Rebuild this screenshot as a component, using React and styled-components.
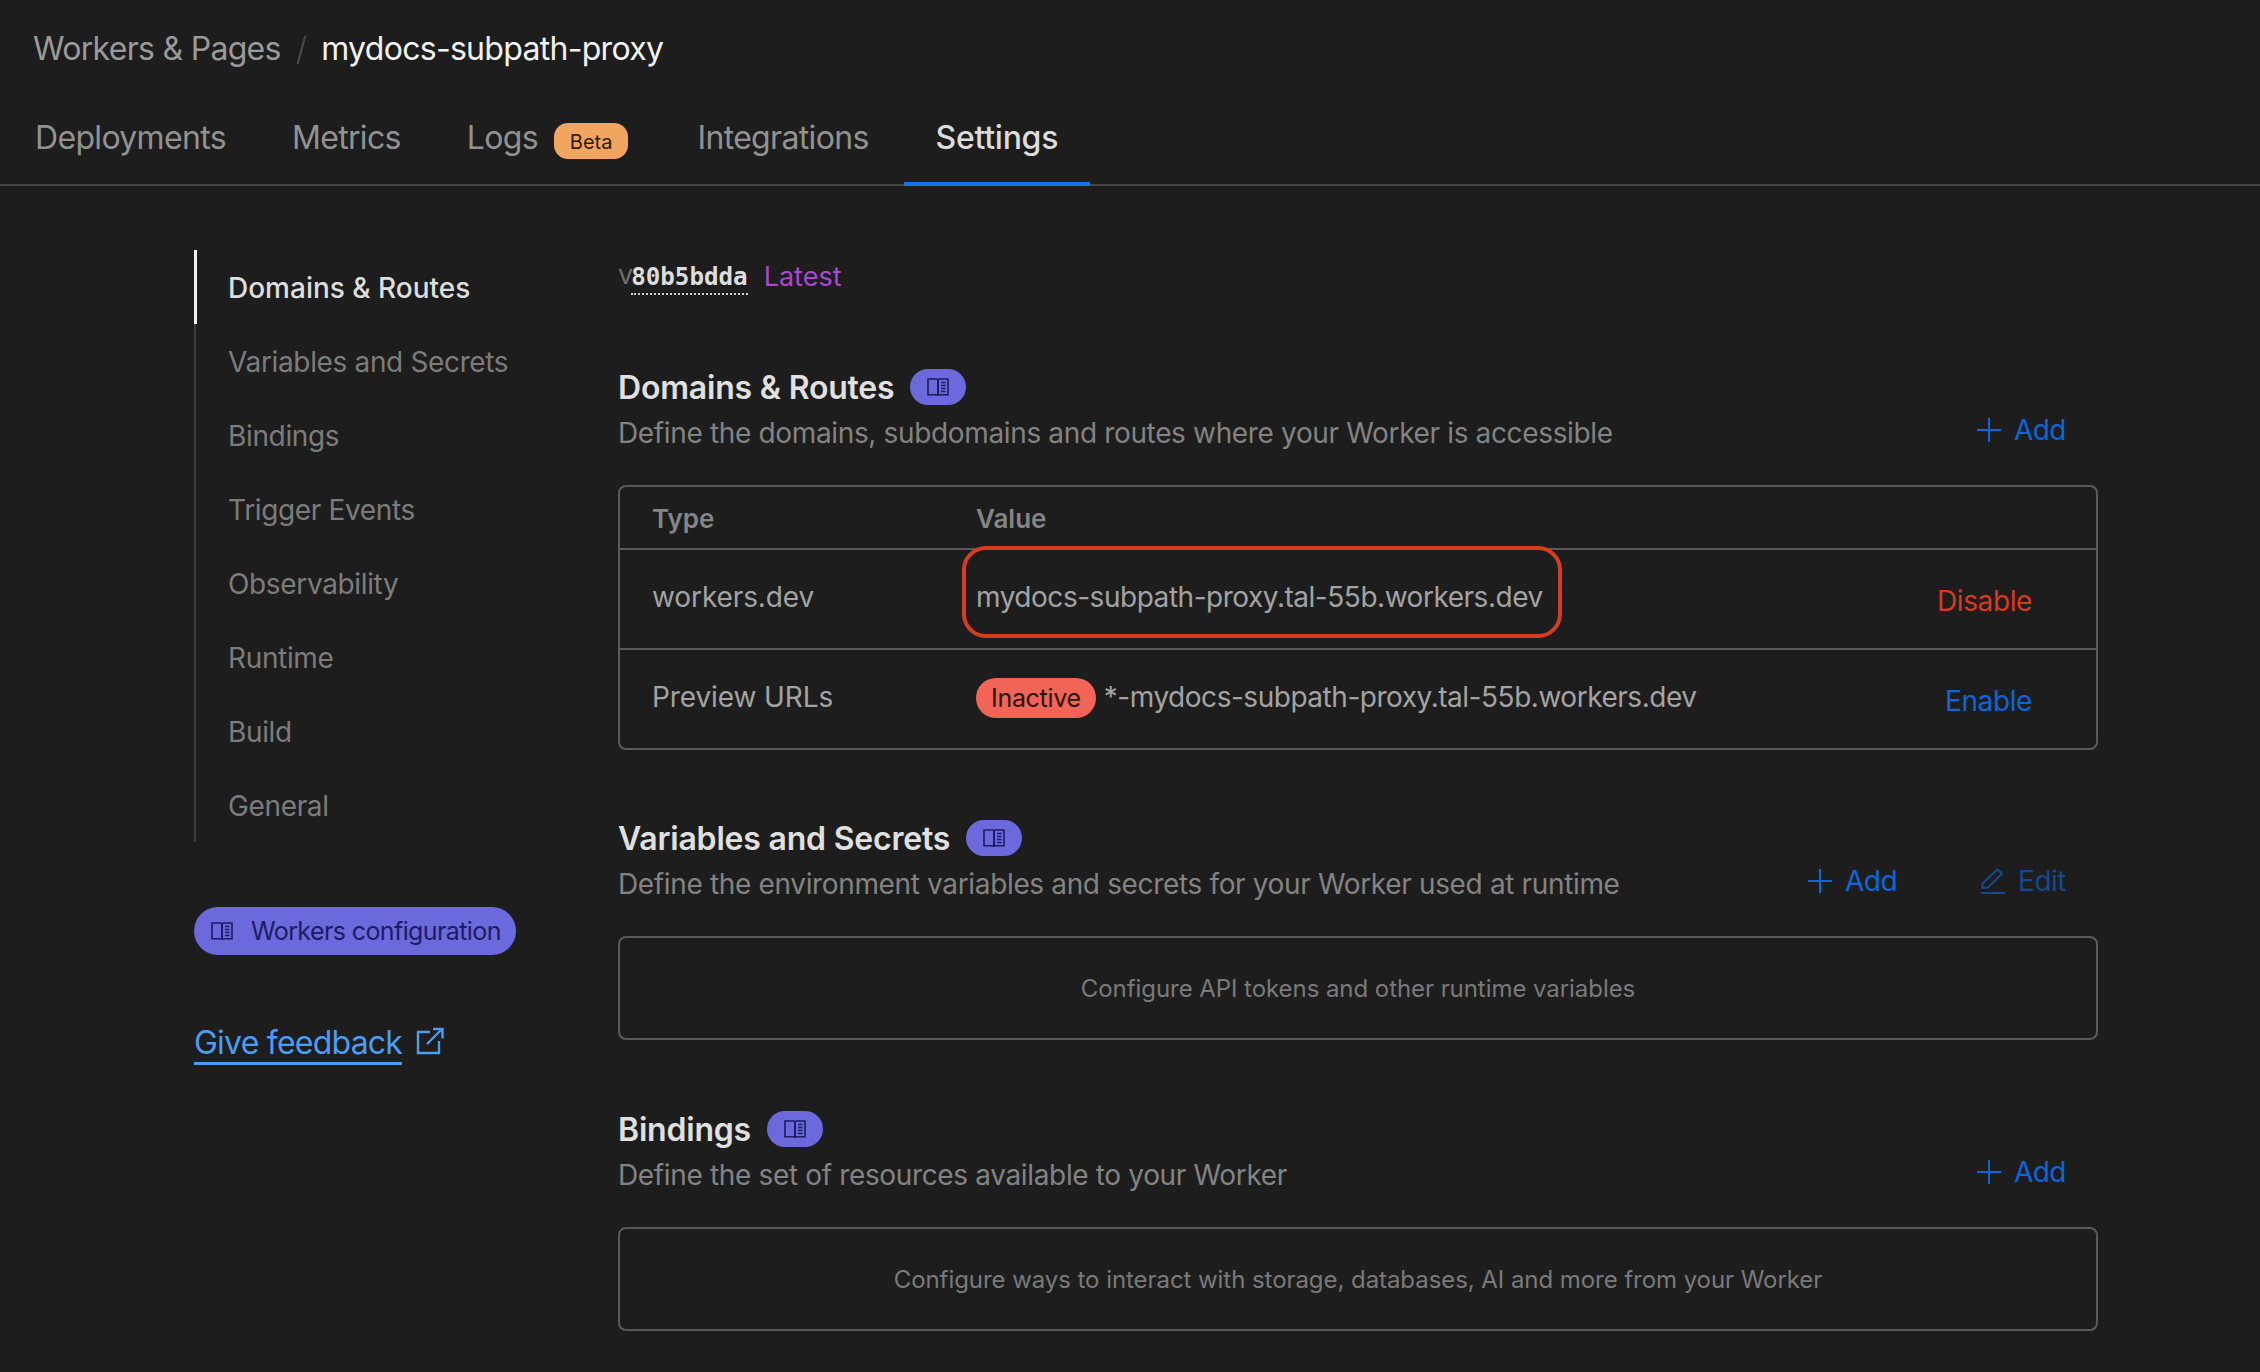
import React from "react";
import styled, { createGlobalStyle } from "styled-components";

const Global = createGlobalStyle`
  html, body { margin: 0; padding: 0; background: #1d1d1d; }
  body { font-family: Inter, "Noto Sans", sans-serif; overflow: hidden; -webkit-font-smoothing: antialiased; }
  * { box-sizing: border-box; }
`;

const Page = styled.div`
  width: 2260px;
  height: 1372px;
  overflow: hidden;
  background: #1d1d1d;
`;
const Crumbs = styled.div`
  height: 98px;
  padding: 30px 0 0 33px;
  display: flex;
  align-items: flex-start;
  font-size: 32px;
  line-height: 38px;
  letter-spacing: -0.7px;
`;
const CrumbLink = styled.span`color: #9a9a9a;`;
const CrumbSep = styled.span`color: #4d4d4d; margin: 0 15px; font-weight: 300;`;
const CrumbCurrent = styled.span`color: #f2f2f2;`;
const TabBar = styled.nav`
  height: 88px;
  display: flex;
  border-bottom: 2px solid #454545;
  padding-left: 2px;
`;
const Tab = styled.div`
  position: relative;
  display: flex;
  align-items: flex-start;
  gap: 16px;
  padding: 21px ${(p) => (p.$active ? 32 : 33)}px 0;
  margin-left: ${(p) => (p.$active ? 2 : 0)}px;
  font-size: 32px;
  line-height: 38px;
  letter-spacing: ${(p) => (p.$active ? "-0.28px" : "-0.67px")};
  color: ${(p) => (p.$active ? "#dcdcdc" : "#929292")};
  height: 88px;
  border-bottom: ${(p) => (p.$active ? "4px solid #1373e8" : "none")};
  font-weight: ${(p) => (p.$active ? 500 : 400)};
`;
const BetaPill = styled.span`
  background: #f2a55f;
  color: #2a1c0e;
  font-size: 20px;
  letter-spacing: 0;
  line-height: 38px;
  height: 36px;
  padding: 0 16px;
  margin-right: 3px;
  border-radius: 14px;
  margin-top: 4px;
`;
const Body = styled.div`
  display: flex;
  padding: 64px 0 0 194px;
  align-items: flex-start;
`;
const Side = styled.aside`
  width: 424px;
  flex: none;
`;
const SideList = styled.ul`
  list-style: none;
  margin: 0;
  padding: 0;
  border-left: 2px solid #3c3c3c;
`;
const SideItem = styled.li`
  height: 74px;
  margin-left: -2px;
  padding: 2px 0 0 31px;
  display: flex;
  align-items: center;
  font-size: 28px;
  letter-spacing: ${(p) => (p.$active ? "0" : "-0.35px")};
  color: ${(p) => (p.$active ? "#dedede" : "#7c7c7c")};
  font-weight: ${(p) => (p.$active ? 500 : 400)};
  border-left: 3px solid ${(p) => (p.$active ? "#f0f0f0" : "transparent")};
`;
const ConfigPill = styled.div`
  margin-top: 65px;
  width: 322px;
  height: 48px;
  border-radius: 24px;
  background: #6b69dc;
  color: #1d1b64;
  font-size: 25px;
  letter-spacing: -0.6px;
  display: flex;
  align-items: center;
  gap: 17px;
  padding-left: 16px;
`;
const Feedback = styled.div`
  margin-top: 69px;
  display: flex;
  align-items: flex-start;
  gap: 14px;
  color: #4a9df2;
  font-size: 32px;
  letter-spacing: -0.77px;
`;
const FeedbackLink = styled.span`
  line-height: 38px;
  border-bottom: 3px solid #4a9df2;
`;
const ExternalSlot = styled.span`
  display: flex;
  margin-top: 3px;
`;
const Main = styled.main`
  width: 1480px;
  flex: none;
`;
const Version = styled.div`
  height: 117px;
  padding-top: 12px;
  display: flex;
  align-items: flex-start;
  font-size: 27px;
  line-height: 26px;
`;
const VPrefix = styled.span`color: #6f6f6f; margin-right: -2px;`;
const Hash = styled.span`
  font-family: "DejaVu Sans Mono", monospace;
  color: #dddddd;
  font-weight: 700;
  font-size: 24.2px;
  border-bottom: 2px dotted #cfcfcf;
  line-height: 31px;
`;
const Latest = styled.span`
  color: #ab47d0;
  margin-left: 16px;
  line-height: 30px;
`;
const SectionHead = styled.header`
  display: flex;
  justify-content: space-between;
  align-items: flex-end;
`;
const TitleRow = styled.div`
  display: flex;
  align-items: center;
  gap: 16px;
  height: 40px;
  font-size: 32px;
  font-weight: 600;
  letter-spacing: -0.2px;
  color: #e0e0e0;
`;
const DocBadge = styled.span`
  width: 56px;
  height: 36px;
  border-radius: 18px;
  background: #6b69dc;
  color: #1d1b64;
  display: flex;
  align-items: center;
  justify-content: center;
`;
const Desc = styled.p`
  margin: 7px 0 0;
  font-size: 28px;
  line-height: 38px;
  letter-spacing: -0.35px;
  color: #838383;
`;
const Actions = styled.div`
  display: flex;
  gap: 84px;
  padding-right: 32px;
  margin-bottom: 5px;
`;
const Action = styled.span`
  display: flex;
  align-items: center;
  gap: 13px;
  font-size: 28px;
  line-height: 34px;
  letter-spacing: -0.5px;
  color: ${(p) => (p.$dim ? "#134a8e" : "#0c66dc")};
`;
const Card = styled.div`
  margin-top: 33px;
  border: 2px solid #5a5a5a;
  border-radius: 8px;
`;
const HeadRow = styled.div`
  display: grid;
  grid-template-columns: 324px 1fr;
  height: 61px;
  padding: 1px 0 0 32px;
  align-items: center;
  font-size: 26px;
  font-weight: 600;
  color: #858585;
`;
const Row = styled.div`
  position: relative;
  display: grid;
  grid-template-columns: 324px 1fr auto;
  height: 100px;
  padding: 0 64px 5px 32px;
  align-items: center;
  font-size: 28px;
  color: #a3a3a3;
  border-top: 2px solid #5a5a5a;
`;
const TypeCell = styled.span`letter-spacing: -0.1px;`;
const ValueCell = styled.div`
  display: flex;
  align-items: center;
  gap: 8px;
  letter-spacing: -0.47px;
`;
const RowAction = styled.span`
  color: ${(p) => (p.$danger ? "#d93a1e" : "#0c66dc")};
  margin-top: 8px;
  letter-spacing: -0.4px;
`;
const InactivePill = styled.span`
  background: #f26455;
  color: #2a1210;
  font-size: 25px;
  letter-spacing: -0.3px;
  height: 40px;
  line-height: 40px;
  padding: 0 15px;
  border-radius: 20px;
  margin-top: 2px;
`;
const Annotation = styled.div`
  position: absolute;
  left: 342px;
  top: -4px;
  width: 600px;
  height: 92px;
  border: 4px solid #d63d1f;
  border-radius: 24px;
  pointer-events: none;
`;
const EmptyCard = styled.div`
  margin-top: 33px;
  height: 104px;
  border: 2px solid #5a5a5a;
  border-radius: 8px;
  display: flex;
  align-items: center;
  justify-content: center;
  font-size: 24px;
  letter-spacing: -0.06px;
  color: #7a7a7a;
`;
const Section = styled.section`
  margin-bottom: ${(p) => p.$gap}px;
`;

const Book = ({ size = 24 }) => (
  <svg width={size} height={size} viewBox="0 0 24 24" fill="none" stroke="currentColor" strokeWidth="1.6">
    <path d="M2 4h8.5c.9 0 1.5.6 1.5 1.5V21c0-.9-.6-1.3-1.5-1.3H2V4Z" />
    <path d="M22 4h-8.5c-.9 0-1.5.6-1.5 1.5V21c0-.9.6-1.3 1.5-1.3H22V4Z" />
    <path d="M15 7.5h4.5M15 10.5h4.5M15 13.5h4.5M15 16.5h4.5" strokeWidth="1.5" />
  </svg>
);
const Plus = () => (
  <svg width="24" height="24" viewBox="0 0 24 24" stroke="currentColor" strokeWidth="2" fill="none">
    <path d="M12 0v24M0 12h24" />
  </svg>
);
const Pen = () => (
  <svg width="24" height="26" viewBox="0 0 24 26" stroke="currentColor" strokeWidth="2" fill="none">
    <path d="M1.5 20V15.5L16.5 1.5 21 5.5 7 19.5l-5.5.5Z" strokeLinejoin="round" />
    <path d="M0 25h24" />
  </svg>
);
const External = () => (
  <svg width="28" height="28" viewBox="0 0 28 28" fill="none" stroke="currentColor" strokeWidth="2.4">
    <path d="M14 5H2v21h21V14" />
    <path d="M11 17 26 2M17 2h9.5v9.5" />
  </svg>
);

const nav = ["Domains & Routes","Variables and Secrets","Bindings","Trigger Events","Observability","Runtime","Build","General"];

export default function App() {
  return (
    <Page>
      <Global />
      <Crumbs>
        <CrumbLink>Workers &amp; Pages</CrumbLink>
        <CrumbSep>/</CrumbSep>
        <CrumbCurrent>mydocs-subpath-proxy</CrumbCurrent>
      </Crumbs>
      <TabBar>
        <Tab>Deployments</Tab>
        <Tab>Metrics</Tab>
        <Tab>Logs<BetaPill>Beta</BetaPill></Tab>
        <Tab>Integrations</Tab>
        <Tab $active>Settings</Tab>
      </TabBar>
      <Body>
        <Side>
          <SideList>
            {nav.map((n, i) => <SideItem key={n} $active={i === 0}>{n}</SideItem>)}
          </SideList>
          <ConfigPill><Book size={24} />Workers configuration</ConfigPill>
          <Feedback><FeedbackLink>Give feedback</FeedbackLink><ExternalSlot><External /></ExternalSlot></Feedback>
        </Side>
        <Main>
          <Version>
            <VPrefix>v</VPrefix><Hash>80b5bdda</Hash><Latest>Latest</Latest>
          </Version>
          <Section $gap={68}>
            <SectionHead>
              <div>
                <TitleRow>Domains &amp; Routes<DocBadge><Book size={24} /></DocBadge></TitleRow>
                <Desc>Define the domains, subdomains and routes where your Worker is accessible</Desc>
              </div>
              <Actions><Action><Plus />Add</Action></Actions>
            </SectionHead>
            <Card>
              <HeadRow><span>Type</span><span>Value</span></HeadRow>
              <Row>
                <TypeCell>workers.dev</TypeCell>
                <ValueCell>mydocs-subpath-proxy.tal-55b.workers.dev</ValueCell>
                <RowAction $danger>Disable</RowAction>
                <Annotation />
              </Row>
              <Row>
                <TypeCell>Preview URLs</TypeCell>
                <ValueCell><InactivePill>Inactive</InactivePill>*-mydocs-subpath-proxy.tal-55b.workers.dev</ValueCell>
                <RowAction>Enable</RowAction>
              </Row>
            </Card>
          </Section>
          <Section $gap={69}>
            <SectionHead>
              <div>
                <TitleRow>Variables and Secrets<DocBadge><Book size={24} /></DocBadge></TitleRow>
                <Desc>Define the environment variables and secrets for your Worker used at runtime</Desc>
              </div>
              <Actions><Action><Plus />Add</Action><Action $dim><Pen />Edit</Action></Actions>
            </SectionHead>
            <EmptyCard>Configure API tokens and other runtime variables</EmptyCard>
          </Section>
          <Section $gap={0}>
            <SectionHead>
              <div>
                <TitleRow>Bindings<DocBadge><Book size={24} /></DocBadge></TitleRow>
                <Desc>Define the set of resources available to your Worker</Desc>
              </div>
              <Actions><Action><Plus />Add</Action></Actions>
            </SectionHead>
            <EmptyCard>Configure ways to interact with storage, databases, AI and more from your Worker</EmptyCard>
          </Section>
        </Main>
      </Body>
    </Page>
  );
}
